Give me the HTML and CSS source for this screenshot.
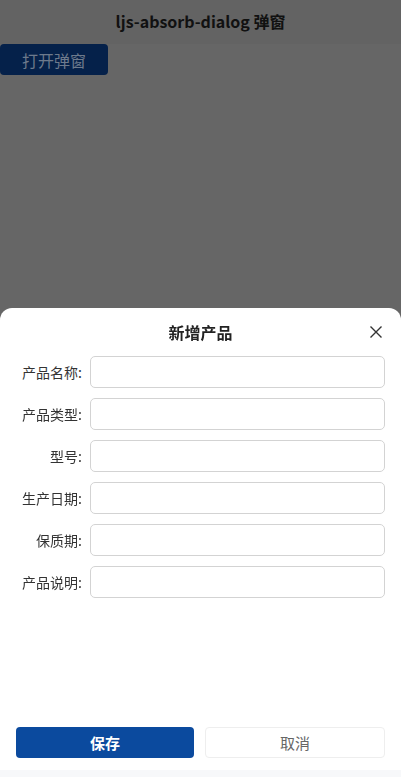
FILE: index.html
```html
<!DOCTYPE html>
<html lang="zh-CN">
<head>
    <meta charset="UTF-8">
    <title>ljs-absorb-dialog 弹窗</title>
    <link rel="stylesheet" href="styles.css">
</head>
<body>
    <div class="nav">ljs-absorb-dialog 弹窗</div>
    <div class="page">
        <button class="open-btn">打开弹窗</button>
    </div>

    <div class="mask">
        <div class="sheet">
            <div class="sheet-head">
                <span class="sheet-title">新增产品</span>
                <span class="close">
                    <svg width="14" height="14" viewBox="0 0 14 14">
                        <path d="M1.5 1.5 L12.5 12.5 M12.5 1.5 L1.5 12.5" stroke="#333" stroke-width="1.4" fill="none"/>
                    </svg>
                </span>
            </div>
            <div class="form">
                <div class="row"><label>产品名称:</label><input class="field"></div>
                <div class="row"><label>产品类型:</label><input class="field"></div>
                <div class="row"><label>型号:</label><input class="field"></div>
                <div class="row"><label>生产日期:</label><input class="field"></div>
                <div class="row"><label>保质期:</label><input class="field"></div>
                <div class="row"><label>产品说明:</label><input class="field"></div>
            </div>
            <div class="actions">
                <button class="btn save">保存</button>
                <button class="btn cancel">取消</button>
            </div>
            <div class="safe"></div>
        </div>
    </div>
</body>
</html>
```

FILE: styles.css
```css
body {
    margin: 0;
    background: #666666;
    font-family: "Noto Sans CJK SC", "Noto Sans", sans-serif;
    height: 777px;
    overflow: hidden;
}

.nav {
    height: 44px;
    line-height: 43px;
    text-align: center;
    background: #636363;
    color: #111;
    font-size: 16px;
    font-weight: bold;
}

.page {
    padding: 0;
}

.open-btn {
    display: block;
    width: 108px;
    height: 31px;
    border: none;
    border-radius: 4px;
    background: #05214a;
    color: #6d7a8c;
    font-family: inherit;
    font-size: 16px;
    padding: 0;
}

.mask {
    position: fixed;
    inset: 0;
    display: flex;
    flex-direction: column;
    justify-content: flex-end;
}

.sheet {
    height: 469px;
    background: #fff;
    border-radius: 12px 12px 0 0;
    display: flex;
    flex-direction: column;
}

.sheet-head {
    position: relative;
    height: 48px;
    display: flex;
    align-items: center;
    justify-content: center;
}

.sheet-title {
    font-size: 16px;
    font-weight: 600;
    color: #222;
}

.close {
    position: absolute;
    right: 18px;
    top: 17px;
    width: 14px;
    height: 14px;
    display: flex;
}

.form {
    flex: 1;
    display: flex;
    flex-direction: column;
    gap: 10px;
    padding: 0 16px 0 0;
}

.row {
    display: flex;
    align-items: center;
    gap: 8px;
}

.row label {
    width: 82px;
    text-align: right;
    font-size: 14px;
    color: #333;
}

.field {
    flex: 1;
    height: 32px;
    box-sizing: border-box;
    border: 1px solid #d3d3d3;
    border-radius: 5px;
    padding: 0 8px;
    font-size: 14px;
    outline: none;
}

.actions {
    display: flex;
    gap: 11px;
    padding: 0 16px 12px;
}

.btn {
    flex: 1;
    height: 31px;
    border-radius: 4px;
    font-family: inherit;
    font-size: 15px;
    padding: 0;
}

.save {
    background: #0b4a9e;
    border: none;
    color: #fff;
    font-weight: bold;
}

.cancel {
    background: #fff;
    border: 1px solid #eeeeee;
    color: #666;
}

.safe {
    height: 7px;
    background: #f7f8fa;
}
```
